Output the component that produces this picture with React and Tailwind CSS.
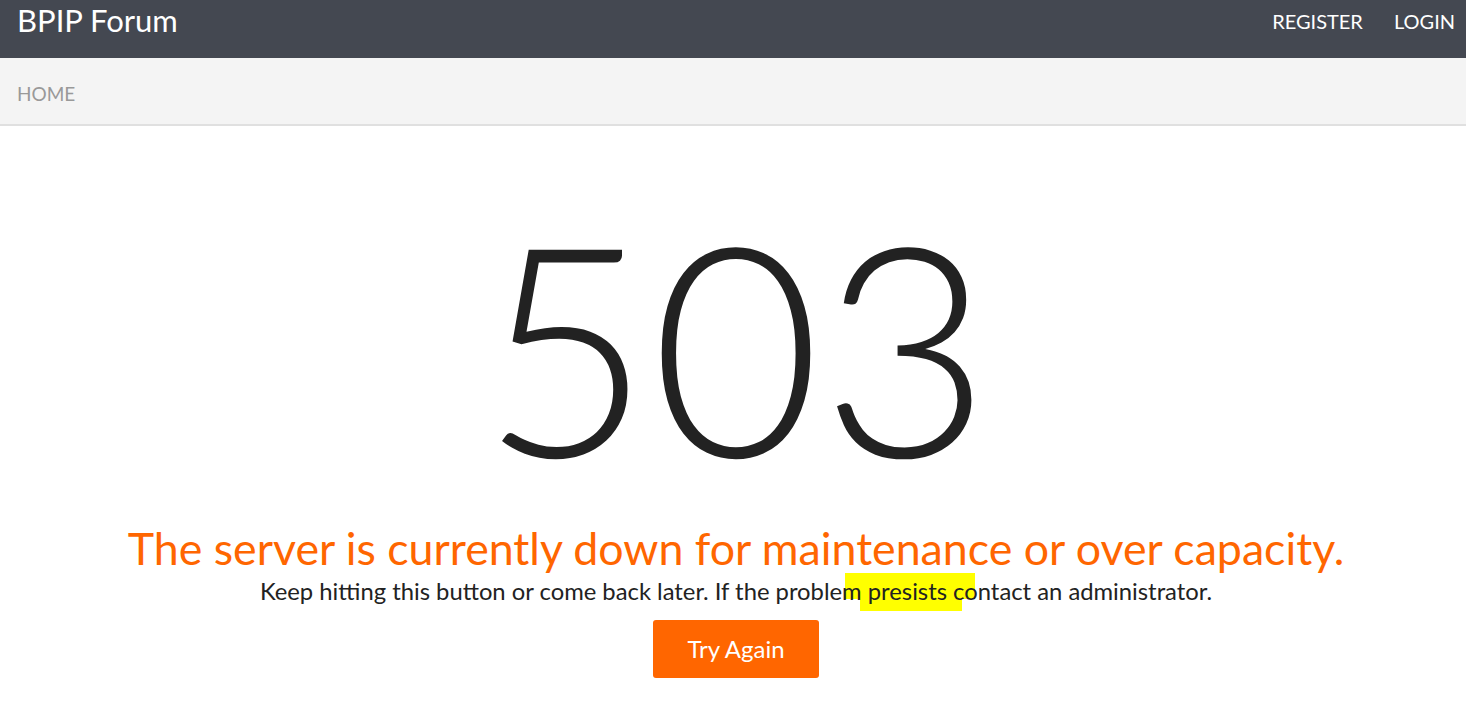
const App = () => {
    return (
        <div className="min-h-screen bg-white font-['Lato','Liberation_Sans',sans-serif]">
            <nav className="h-[58px] bg-[#444851] flex items-center justify-between pl-[17px] pr-[11px]">
                <a href="#" className="text-white text-[31px] leading-none -mt-[17px]">BPIP Forum</a>
                <div className="flex items-center gap-[31px] -mt-[17px]">
                    <a href="#" className="text-white text-[20px] uppercase">Register</a>
                    <a href="#" className="text-white text-[20px] uppercase">Login</a>
                </div>
            </nav>

            <div className="h-[68px] bg-[#f4f4f4] border-b-2 border-[#e0e0e0] flex items-center px-[17px] pt-[6px]">
                <span className="text-[#999999] text-[19px] uppercase">Home</span>
            </div>

            <main className="flex flex-col items-center text-center pl-[6px]">
                <h1 className="text-[293px] font-light leading-none text-[#222222] mt-[71px]">503</h1>
                <h2 className="text-[44.7px] leading-none text-[#ff6600] mt-[36px]">
                    The server is currently down for maintenance or over capacity.
                </h2>
                <p className="text-[23.8px] leading-[36px] text-[#222222] mt-[2px] isolate">
                    Keep hitting this button or come back later. If the proble
                    <span className="relative">
                        <span className="absolute -z-10 left-[3px] top-[-4px] w-[130px] h-[26px] bg-[#ffff00]"></span>
                        <span className="absolute -z-10 left-[18px] top-[20px] w-[102px] h-[14px] bg-[#ffff00]"></span>
                        m presists co
                    </span>
                    ntact an administrator.
                </p>
                <button className="mt-[11px] w-[166px] h-[58px] bg-[#ff6600] rounded-[3px] text-white text-[24px]">
                    Try Again
                </button>
            </main>
        </div>
    );
};

export default App;
